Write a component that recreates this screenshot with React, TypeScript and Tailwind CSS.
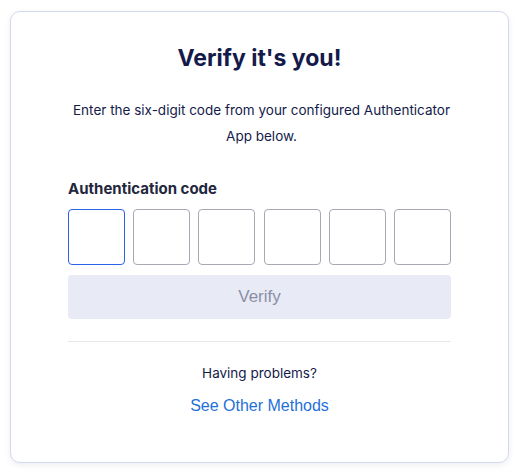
import React from "react";

export default function App() {
  const boxes = [0, 1, 2, 3, 4, 5];
  return (
    <div className="min-h-[473px] w-[519px] bg-white" style={{ fontFamily: "Inter, 'Noto Sans', sans-serif" }}>
      <div className="pt-[11px] pl-[10px]">
        <div className="w-[499px] h-[452px] rounded-[10px] border border-[#d3d9ef] bg-white shadow-[0_2px_6px_rgba(30,40,90,0.08)] px-[57px] pt-[30px]">
          <h1 className="text-center text-[23px] leading-[32px] font-bold text-[#141a4a]">Verify it's you!</h1>
          <p className="mt-[23px] text-center text-[13.5px] leading-[26px] text-[#141a4a] pl-[4px]">
            Enter the six-digit code from your configured Authenticator App below.
          </p>
          <div className="mt-[30px] text-[15px] leading-[20px] font-bold text-[#23273d]">Authentication code</div>
          <div className="mt-[10px] flex justify-between">
            {boxes.map((i) => (
              <div
                key={i}
                className={
                  i === 0
                    ? "w-[57px] h-[56px] rounded-[4px] border border-[#2a62e8]"
                    : "w-[57px] h-[56px] rounded-[4px] border border-[#a9a8b4]"
                }
              />
            ))}
          </div>
          <div
            className="mt-[10px] h-[44px] rounded-[4px] bg-[#e8eaf6] flex items-center justify-center text-[17px] text-[#8b8fa4]"
            style={{ fontFamily: "'Liberation Sans', Arial, sans-serif" }}
          >
            Verify
          </div>
          <div className="mt-[22px] h-px bg-[#e6e8ee]" />
          <div className="mt-[21px] text-center text-[13.5px] leading-[20px] text-[#141a4a]">Having problems?</div>
          <div
            className="mt-[13px] text-center text-[16px] leading-[20px] text-[#1f6fd9]"
            style={{ fontFamily: "'Liberation Sans', Arial, sans-serif" }}
          >
            See Other Methods
          </div>
        </div>
      </div>
    </div>
  );
}
